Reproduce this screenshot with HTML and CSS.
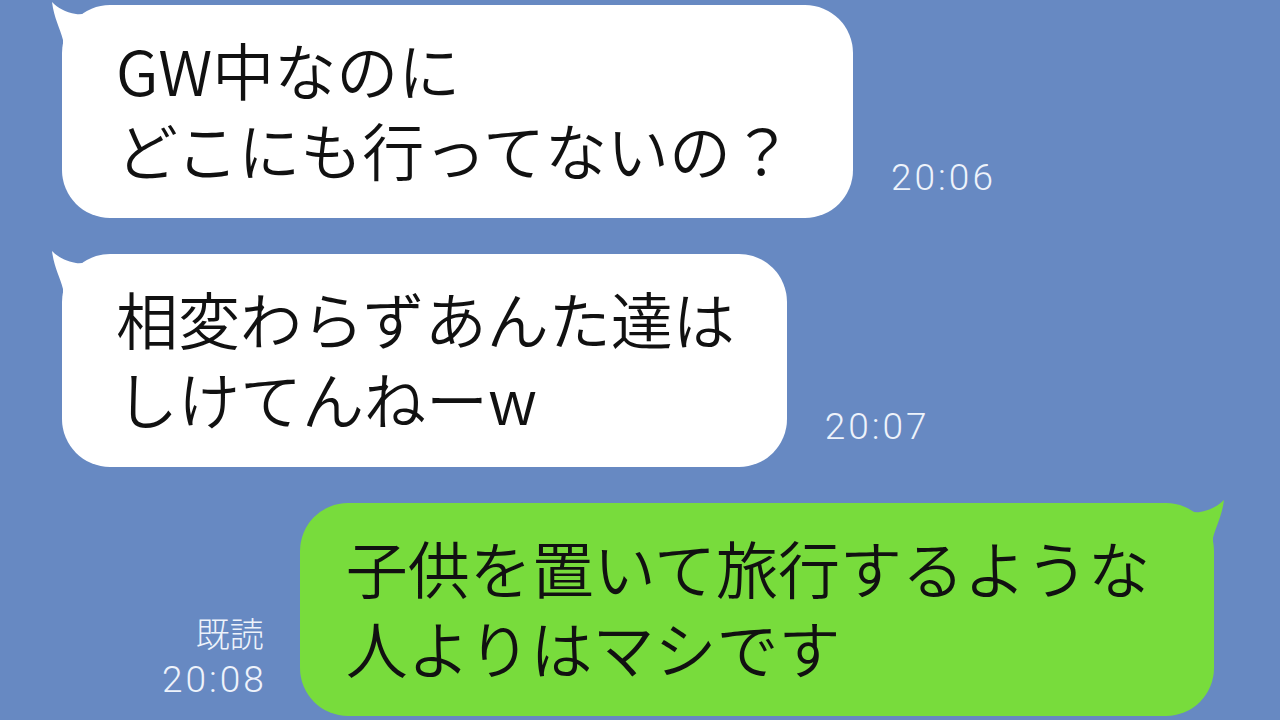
FILE: index.html
```html
<!DOCTYPE html>
<html lang="ja">
<head>
    <meta charset="UTF-8">
    <meta name="viewport" content="width=device-width, initial-scale=1.0">
    <title>トーク</title>
    <link rel="stylesheet" href="styles.css">
</head>
<body>
    <div class="chat">
        <div class="row">
            <div class="bubble white wide">
                <svg class="tail" width="70" height="50" viewBox="0 0 70 50"><path d="M2,2 C4,18 10,28 13,40 L13,50 L70,50 L70,5 C50,6 36,16 26,14 C15,12 8,8 2,2 Z"/></svg>
                <p>GW中なのに<br>どこにも行ってないの？</p>
            </div>
            <span class="time">20:06</span>
        </div>
        <div class="row">
            <div class="bubble white">
                <svg class="tail" width="70" height="50" viewBox="0 0 70 50"><path d="M2,2 C4,18 10,28 13,40 L13,50 L70,50 L70,5 C50,6 36,16 26,14 C15,12 8,8 2,2 Z"/></svg>
                <p>相変わらずあんた達は<br>しけてんねーw</p>
            </div>
            <span class="time">20:07</span>
        </div>
        <div class="row mine">
            <div class="meta">
                <span class="read">既読</span>
                <span class="time">20:08</span>
            </div>
            <div class="bubble green">
                <svg class="tail" width="70" height="50" viewBox="0 0 70 50"><path d="M2,2 C4,18 10,28 13,40 L13,50 L70,50 L70,5 C50,6 36,16 26,14 C15,12 8,8 2,2 Z"/></svg>
                <p>子供を置いて旅行するような<br>人よりはマシです</p>
            </div>
        </div>
    </div>
</body>
</html>
```

FILE: styles.css
```css
body {
    margin: 0;
    width: 1280px;
    height: 720px;
    overflow: hidden;
    background-color: #6789c2;
    font-family: "Noto Sans CJK JP", "Noto Sans", sans-serif;
}
.chat {
    display: flex;
    flex-direction: column;
    gap: 36px;
    padding: 5px 66px 0 62px;
}
.row {
    display: flex;
    align-items: flex-end;
    gap: 38px;
}
.row.mine {
    justify-content: flex-end;
    gap: 36px;
}
.bubble {
    position: relative;
    border-radius: 48px;
    padding: 24px 52px 29px 54px;
}
.bubble.wide {
    padding-right: 60px;
}
.bubble p {
    margin: 0;
    font-size: 62px;
    font-weight: 350;
    line-height: 80px;
    color: #111;
    white-space: nowrap;
    position: relative;
}
.bubble.white {
    background-color: #fff;
}
.bubble.green {
    background-color: #78dc3c;
    padding: 24px 64px 29px 46px;
}
.tail {
    position: absolute;
    top: -5px;
    left: -12px;
}
.white .tail {
    fill: #fff;
}
.green .tail {
    fill: #78dc3c;
    left: auto;
    right: -12px;
    transform: scaleX(-1);
}
.time {
    font-family: Roboto, "Liberation Sans", sans-serif;
    font-weight: 300;
    font-size: 37px;
    letter-spacing: 3px;
    line-height: 44px;
    color: #eef3fb;
    margin-bottom: 18px;
}
.meta {
    display: flex;
    flex-direction: column;
    align-items: flex-end;
    margin-bottom: 14px;
}
.meta .time {
    margin: 0 -3px 0 0;
}
.read {
    font-size: 34px;
    font-weight: 300;
    line-height: 50px;
    color: #eef3fb;
}
```
